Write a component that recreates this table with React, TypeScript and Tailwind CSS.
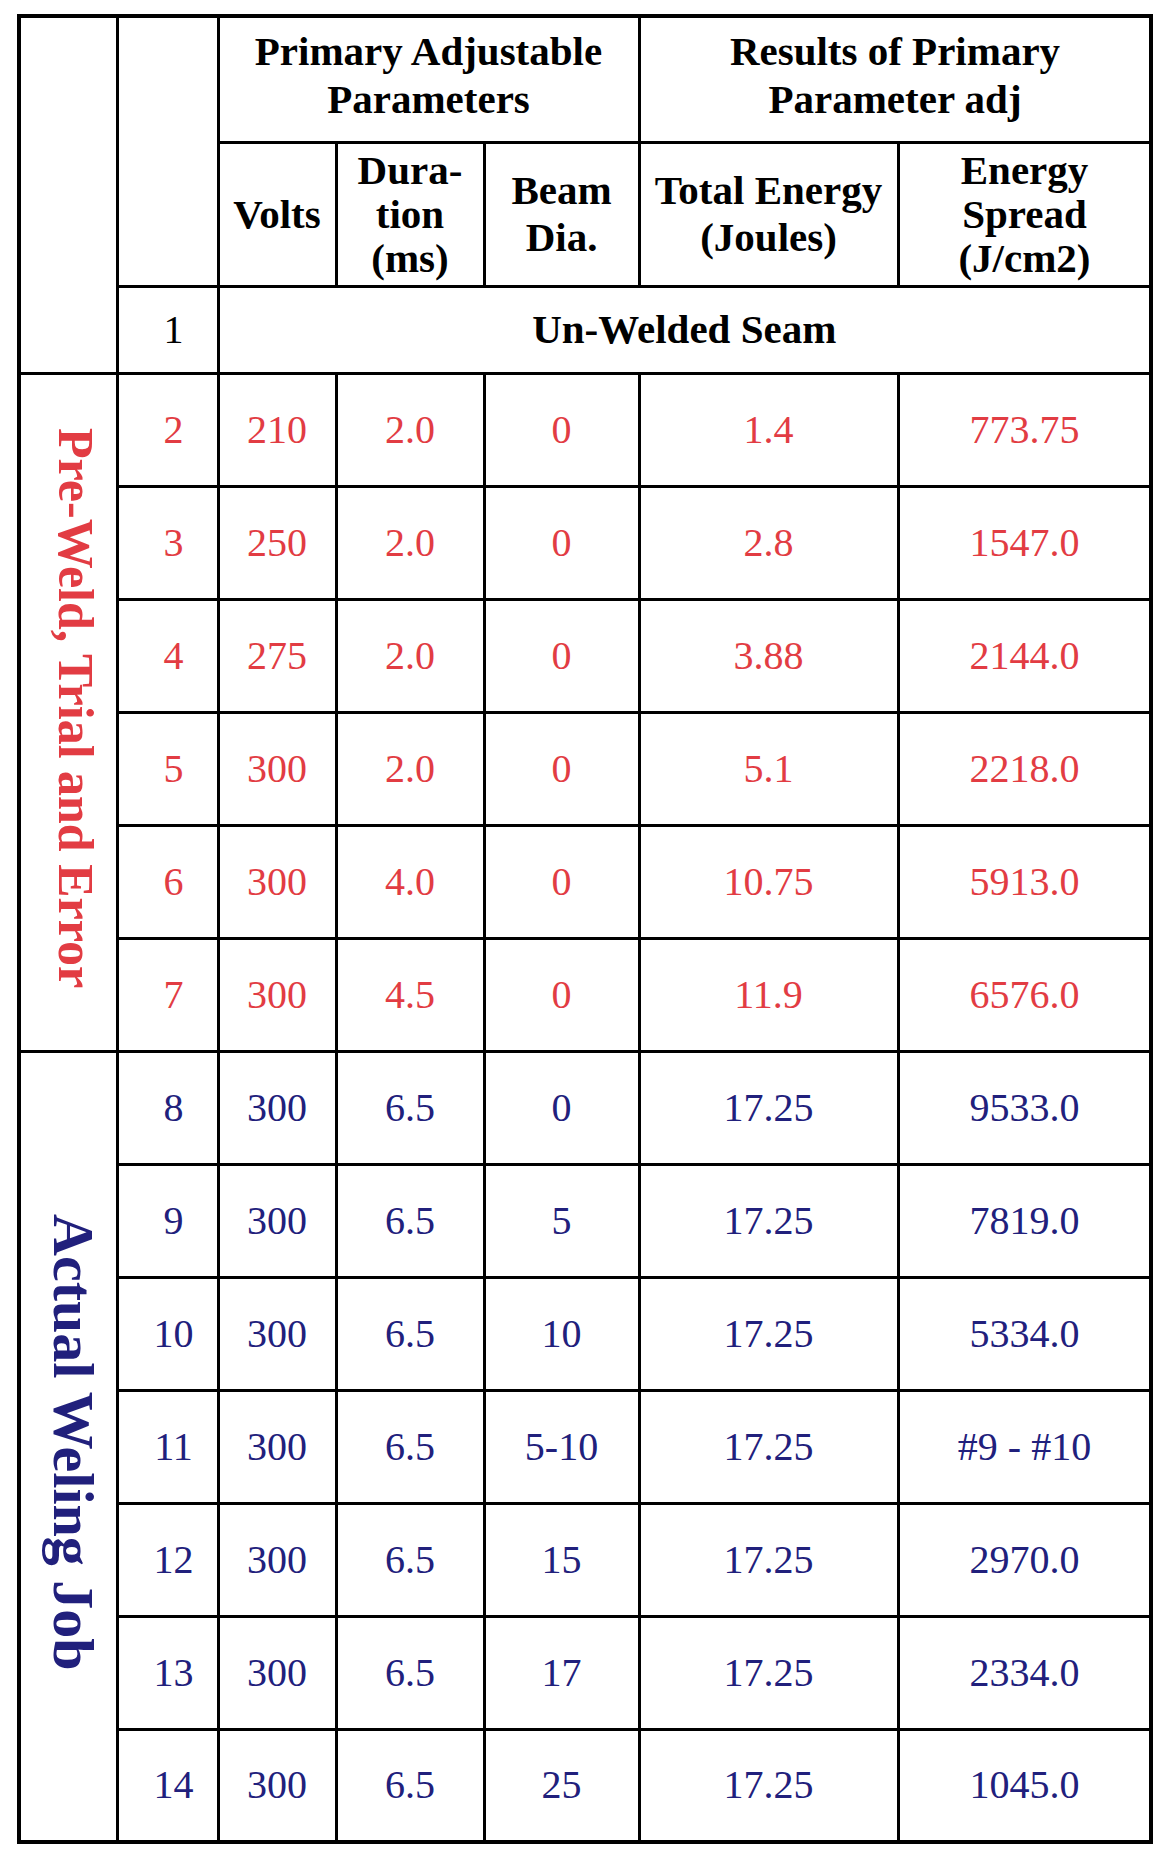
// Laser weld parameter table (scanned sheet recreation)

import React from 'react';

type Row = [number, string, string, string, string, string];

const preWeld: Row[] = [
  [2, '210', '2.0', '0', '1.4', '773.75'],
  [3, '250', '2.0', '0', '2.8', '1547.0'],
  [4, '275', '2.0', '0', '3.88', '2144.0'],
  [5, '300', '2.0', '0', '5.1', '2218.0'],
  [6, '300', '4.0', '0', '10.75', '5913.0'],
  [7, '300', '4.5', '0', '11.9', '6576.0'],
];

const actualJob: Row[] = [
  [8, '300', '6.5', '0', '17.25', '9533.0'],
  [9, '300', '6.5', '5', '17.25', '7819.0'],
  [10, '300', '6.5', '10', '17.25', '5334.0'],
  [11, '300', '6.5', '5-10', '17.25', '#9 - #10'],
  [12, '300', '6.5', '15', '17.25', '2970.0'],
  [13, '300', '6.5', '17', '17.25', '2334.0'],
  [14, '300', '6.5', '25', '17.25', '1045.0'],
];

const cell = 'border-[3px] border-black text-center align-middle p-0';
const head = `${cell} font-bold text-[41px] text-black`;

const DataRow: React.FC<{ row: Row; color: string; label?: React.ReactNode }> = ({ row, color, label }) => {
  const [num, volts, dur, beam, total, spread] = row;
  return (
    <tr className="h-[113px]">
      {label}
      <td className={`${cell} ${color} pl-[12px]`}>{num}</td>
      <td className={`${cell} ${color}`}>{volts}</td>
      <td className={`${cell} ${color}`}>{dur}</td>
      <td className={`${cell} ${color}`}>{beam}</td>
      <td className={`${cell} ${color}`}>{total}</td>
      <td className={`${cell} ${color}`}>{spread}</td>
    </tr>
  );
};

const App: React.FC = () => {
  const red = 'text-[#e23c43]';
  const navy = 'text-[#21207c]';

  return (
    <div className="min-h-screen bg-white pt-[14px] pl-[17px] font-['Liberation_Serif',_'Times_New_Roman',_serif]">
      <table className="table-fixed border-collapse border-[4px] border-black w-[1132px] text-[40px] leading-none">
        <colgroup>
          <col className="w-[98px]" />
          <col className="w-[101px]" />
          <col className="w-[118px]" />
          <col className="w-[148px]" />
          <col className="w-[155px]" />
          <col className="w-[259px]" />
          <col className="w-[253px]" />
        </colgroup>
        <tbody>
          {/* Header groups */}
          <tr className="h-[126px]">
            <td rowSpan={3} className={cell} />
            <td rowSpan={2} className={cell} />
            <td colSpan={3} className={`${head} leading-[48px] pb-[8px]`}>
              Primary Adjustable
              <br />
              Parameters
            </td>
            <td colSpan={2} className={`${head} leading-[48px] pb-[8px]`}>
              Results of Primary
              <br />
              Parameter adj
            </td>
          </tr>

          {/* Column names */}
          <tr className="h-[144px]">
            <td className={head}>Volts</td>
            <td className={`${head} text-[39px] leading-[44px]`}>
              Dura-
              <br />
              tion
              <br />
              (ms)
            </td>
            <td className={`${head} leading-[47px]`}>
              Beam
              <br />
              Dia.
            </td>
            <td className={`${head} leading-[47px] whitespace-nowrap`}>
              Total Energy
              <br />
              (Joules)
            </td>
            <td className={`${head} text-[39px] leading-[44px]`}>
              Energy
              <br />
              Spread
              <br />
              (J/cm2)
            </td>
          </tr>

          {/* Baseline row */}
          <tr className="h-[87px]">
            <td className={`${cell} text-black pl-[12px]`}>1</td>
            <td colSpan={6} className={`${cell} font-bold text-[41px] text-black`}>
              Un-Welded Seam
            </td>
          </tr>

          {preWeld.map((row, i) => (
            <DataRow
              key={row[0]}
              row={row}
              color={red}
              label={
                i === 0 ? (
                  <td rowSpan={preWeld.length} className={`${cell} pl-[16px]`}>
                    <span className={`inline-block [writing-mode:vertical-rl] font-bold text-[50px] leading-none whitespace-nowrap ${red}`}>
                      Pre-Weld, Trial and Error
                    </span>
                  </td>
                ) : undefined
              }
            />
          ))}

          {actualJob.map((row, i) => (
            <DataRow
              key={row[0]}
              row={row}
              color={navy}
              label={
                i === 0 ? (
                  <td rowSpan={actualJob.length} className={`${cell} pl-[10px]`}>
                    <span className={`inline-block [writing-mode:vertical-rl] font-bold text-[58px] leading-none whitespace-nowrap ${navy}`}>
                      Actual Weling Job
                    </span>
                  </td>
                ) : undefined
              }
            />
          ))}
        </tbody>
      </table>
    </div>
  );
};

export default App;
